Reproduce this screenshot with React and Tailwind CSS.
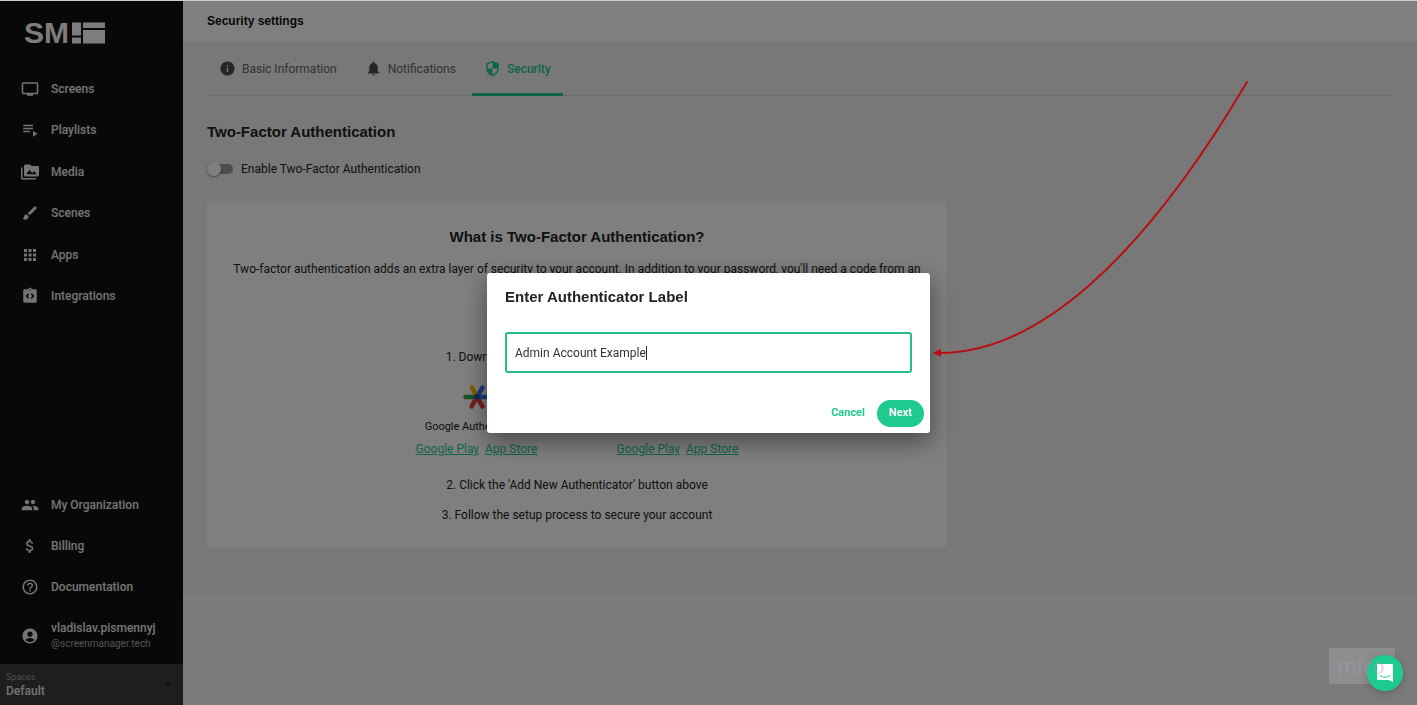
import React, { useState } from "react";
import {
  MdPermMedia,
  MdBrush,
  MdApps,
  MdIntegrationInstructions,
  MdPeople,
  MdAttachMoney,
  MdHelpOutline,
  MdAccountCircle,
  MdInfo,
  MdNotifications,
  MdSecurity,
  MdArrowDropDown,
} from "react-icons/md";

const MAIN_NAV = [
  { label: "Screens", icon: ScreenIcon },
  { label: "Playlists", icon: PlaylistIcon },
  { label: "Media", icon: MdPermMedia },
  { label: "Scenes", icon: MdBrush },
  { label: "Apps", icon: MdApps },
  { label: "Integrations", icon: MdIntegrationInstructions },
];

const BOTTOM_NAV = [
  { label: "My Organization", icon: MdPeople },
  { label: "Billing", icon: MdAttachMoney },
  { label: "Documentation", icon: MdHelpOutline },
];

const TABS = [
  { label: "Basic Information", icon: MdInfo },
  { label: "Notifications", icon: MdNotifications },
  { label: "Security", icon: MdSecurity },
];

function ScreenIcon({ size, className }) {
  return (
    <svg viewBox="0 0 24 24" width={size} height={size} className={className} fill="currentColor">
      <path d="M21 3H3c-1.100 0-2 .9-2 2v12c0 1.100.9 2 2 2h5v2h8v-2h5c1.100 0 2-.9 2-2V5c0-1.100-.9-2-2-2zm0 14H3V5h18v12z" />
    </svg>
  );
}

function PlaylistIcon({ size, className }) {
  return (
    <svg viewBox="0 0 24 24" width={size} height={size} className={className} fill="currentColor">
      <path d="M3 5h13v2H3zM3 9h13v2H3zM3 13h9v2H3zM16 13v8l6-4z" />
    </svg>
  );
}

const Logo = () => (
  <div className="flex items-center gap-0.5 text-[#fafafa]" aria-label="SM">
    <span className="text-[30px] leading-[22px] font-bold font-[Liberation_Sans,sans-serif]">
      SM
    </span>
    <svg viewBox="0 0 34 22" width="34" height="22" fill="currentColor">
      <path d="M1 0.500h9v13H1zM1 15.500h9v6H1zM12 0.500h22v5.500H12zM12 8h22v13.500H12z" />
    </svg>
  </div>
);

const NavItem = ({ icon: Icon, label }) => (
  <a href="#" className="flex items-center gap-3 pl-[21px] text-[12px] font-medium text-[#e8e8e8]">
    <Icon size={18} className="shrink-0" />
    {label}
  </a>
);

const Sidebar = () => (
  <aside className="w-[183px] shrink-0 bg-[#111] flex flex-col">
    <div className="pl-6 pt-[22px] pb-6">
      <Logo />
    </div>
    <nav className="grid grid-rows-6 h-[249px]">
      {MAIN_NAV.map((item) => (
        <NavItem key={item.label} {...item} />
      ))}
    </nav>
    <nav className="grid grid-rows-3 h-[124px] mt-auto">
      {BOTTOM_NAV.map((item) => (
        <NavItem key={item.label} {...item} />
      ))}
    </nav>
    <a href="#" className="flex items-center gap-3 pl-[21px] py-3 text-[#e8e8e8]">
      <MdAccountCircle size={18} className="shrink-0" />
      <span className="flex flex-col">
        <span className="text-[12px] leading-4 font-medium">vladislav.pismennyj</span>
        <span className="text-[10px] leading-4 text-[#a8a8a8]">@screenmanager.tech</span>
      </span>
    </a>
    <button className="h-[41px] bg-[#3c3c3c] flex items-center justify-between pl-1.5 pr-2 text-left">
      <span className="flex flex-col">
        <span className="text-[9px] leading-3 text-[#9a9a9a]">Spaces</span>
        <span className="text-[12px] leading-4 font-medium text-[#e8e8e8]">Default</span>
      </span>
      <MdArrowDropDown size={14} color="#151515" />
    </button>
  </aside>
);

// Coloured asterisk of Google Authenticator
const GoogleAuthIcon = () => (
  <svg viewBox="0 0 28 28" width="28" height="28" fill="none" strokeWidth="4.500" strokeLinecap="round">
    <path d="M14 14L9 4.500" stroke="#fbbc04" />
    <path d="M2.500 14H13" stroke="#34a853" />
    <path d="M8.500 23.500l5.500-9.500 5.500 9.500" stroke="#ea4335" />
    <path d="M14 14h11.500M14 14l5.500-9.500" stroke="#3c78f0" />
    <path d="M13.500 14h1" stroke="#2450b0" />
  </svg>
);

const MicrosoftAuthIcon = () => (
  <svg viewBox="0 0 28 28" width="28" height="28" fill="none">
    <path d="M14 3l9 4v7c0 5-4 9-9 11-5-2-9-6-9-11V7z" fill="#0f6cbd" />
    <circle cx="14" cy="12" r="3" fill="#fff" />
  </svg>
);

const AuthApp = ({ icon: Icon, name }) => (
  <div className="w-[123px] flex flex-col items-center whitespace-nowrap">
    <Icon />
    <div className="mt-2 text-[11px] leading-4">{name}</div>
    <div className="mt-1.5 flex gap-1.5 text-[12px] leading-4 text-[#1dcb8f] underline">
      <a href="#">Google Play</a>
      <a href="#">App Store</a>
    </div>
  </div>
);

const InfoCard = () => (
  <section className="mt-[22px] max-w-[740px] rounded-sm bg-white px-6 pt-[26px] pb-6 flex flex-col items-center text-center text-[12px] leading-4 text-[#222]">
    <h3 className="text-[15px] leading-5 font-bold font-[Liberation_Sans,sans-serif]">
      What is Two-Factor Authentication?
    </h3>
    <p className="mt-3 leading-5">
      Two-factor authentication adds an extra layer of security to your account. In addition to your
      password, you'll need a code from an
    </p>
    <h4 className="mt-[34px] text-[13px] leading-5 font-bold">How to set up:</h4>
    <p className="mt-4">1. Download an authenticator app for your phone:</p>
    <div className="mt-[18px] flex gap-[78px]">
      <AuthApp icon={GoogleAuthIcon} name="Google Authenticator" />
      <AuthApp icon={MicrosoftAuthIcon} name="Microsoft Authenticator" />
    </div>
    <p className="mt-5">2. Click the 'Add New Authenticator' button above</p>
    <p className="mt-3.5">3. Follow the setup process to secure your account</p>
  </section>
);

const LabelDialog = () => {
  const [label, setLabel] = useState("Admin Account Example");
  return (
    <div
      role="dialog"
      aria-labelledby="dialog-title"
      className="relative w-[443px] rounded-[3px] bg-white shadow-[0_8px_24px_rgba(0,0,0,0.45)]"
    >
      <h2
        id="dialog-title"
        className="px-[18px] pt-3.5 text-[15px] leading-5 font-bold text-[#222] font-[Liberation_Sans,sans-serif]"
      >
        Enter Authenticator Label
      </h2>
      <div className="relative mx-[18px] mt-[25px]">
        <input
          aria-label="Authenticator label"
          value={label}
          onChange={(e) => setLabel(e.target.value)}
          className="block w-full h-[41px] rounded-[3px] border-2 border-[#25bd8b] px-2 text-[12px] text-[#333] outline-none"
        />
        {/* Caret */}
        <span className="absolute left-[141px] top-3.5 w-px h-3.5 bg-[#333]" />
      </div>
      <div className="mt-[27px] pr-1.5 pb-1.5 flex justify-end items-center gap-3 text-[11px] font-bold">
        <button className="text-[#1dcb8f]">Cancel</button>
        <button className="h-[27px] px-3 rounded-full bg-[#1dcb8f] text-white">Next</button>
      </div>
      {/* Pointer to the field */}
      <svg
        viewBox="0 0 320 284"
        width="320"
        height="284"
        fill="none"
        stroke="#b80f12"
        strokeWidth="2"
        strokeLinecap="round"
        className="absolute left-[445px] -top-[196px]"
      >
        <path d="M315 5C208 186 103 277 6 276" />
        <path d="M3 276l5-2.500v5z" fill="#b80f12" />
      </svg>
    </div>
  );
};

const ChatWidget = () => (
  <div className="fixed right-3.5 bottom-3.5 w-[74px] h-[43px]">
    <div className="w-[66px] h-9 bg-[#8e8e8e]" />
    <button
      aria-label="Open chat"
      className="absolute right-0 bottom-0 w-9 h-9 rounded-full bg-[#1dcb8f] flex items-center justify-center shadow-[0_2px_8px_rgba(0,0,0,0.2)]"
    >
      <svg viewBox="0 0 16 18" width="16" height="18">
        <path d="M1 0h14a1 1 0 0 1 1 1v17l-4-2H1a1 1 0 0 1-1-1V1a1 1 0 0 1 1-1z" fill="#fff" />
        <path d="M3 11.500c3 2.500 7 2.500 10 0" fill="none" stroke="#1dcb8f" strokeLinecap="round" />
      </svg>
    </button>
    <span className="absolute left-2 top-1.5 text-[21px] leading-6 font-semibold font-[Open_Sans,sans-serif] text-[#b09ac0]/35 pointer-events-none">
      miro
    </span>
  </div>
);

export default function App() {
  const [tab, setTab] = useState("Security");
  const [enabled, setEnabled] = useState(false);

  return (
    <div className="relative min-h-screen flex bg-[#f6f6f6] font-[Roboto,sans-serif]">
      <Sidebar />

      <main className="flex-1 min-w-0">
        <header className="h-[42px] bg-white flex items-center px-6">
          <h1 className="text-[12px] leading-4 font-bold text-[#111] font-[Liberation_Sans,sans-serif]">
            Security settings
          </h1>
        </header>

        <div className="bg-[#f0f0f0] px-6 pb-12">
          <div role="tablist" className="flex gap-1 h-[54px] border-b border-[#d8d8d8]">
            {TABS.map(({ label, icon: Icon }) => (
              <button
                key={label}
                role="tab"
                aria-selected={tab === label}
                onClick={() => setTab(label)}
                className={
                  tab === label
                    ? "flex items-center gap-1.5 px-3 pt-0.5 -mb-px border-b-[3px] border-[#1dcb8f] text-[12px] font-medium text-[#1dcb8f]"
                    : "flex items-center gap-1.5 px-3 pt-0.5 -mb-px border-b-[3px] border-transparent text-[12px] text-[#666]"
                }
              >
                <Icon size={17} className="shrink-0" color={tab === label ? "#1dcb8f" : "#4d4d4d"} />
                {label}
              </button>
            ))}
          </div>

          <h2 className="mt-[26px] text-[15px] leading-5 font-bold text-[#222] font-[Liberation_Sans,sans-serif]">
            Two-Factor Authentication
          </h2>

          <label className="mt-[17px] flex items-center gap-2 text-[12px] leading-5 text-[#222]">
            <input
              type="checkbox"
              checked={enabled}
              onChange={() => setEnabled((v) => !v)}
              className="peer sr-only"
            />
            <span className="w-[26px] h-2.5 rounded-full bg-[#9a9a9a] flex items-center peer-checked:justify-end">
              <span className="w-3.5 h-3.5 rounded-full bg-white shadow-[0_1px_2px_rgba(0,0,0,0.4)]" />
            </span>
            Enable Two-Factor Authentication
          </label>

          <InfoCard />
        </div>
      </main>

      <div className="fixed inset-0 grid place-items-center bg-black/50 border-t border-[#d9c9cc]">
        <LabelDialog />
      </div>
      <ChatWidget />
    </div>
  );
}
